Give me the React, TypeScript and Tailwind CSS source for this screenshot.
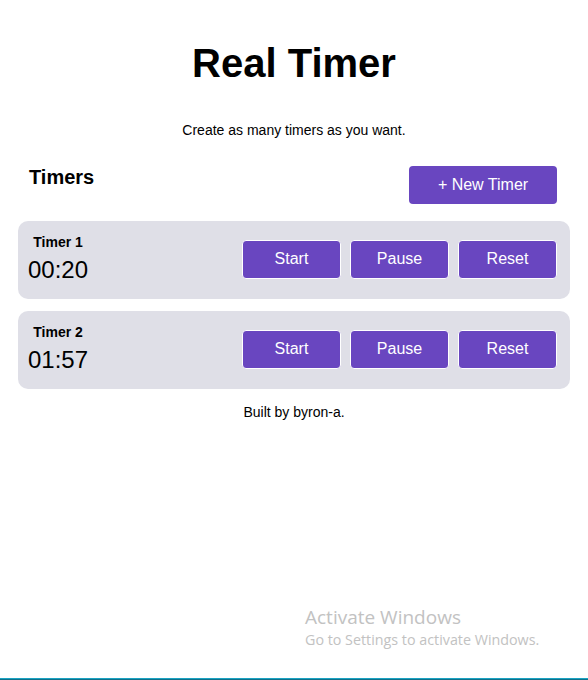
import React from "react";

type Timer = { name: string; time: string };

const timers: Timer[] = [
  { name: "Timer 1", time: "00:20" },
  { name: "Timer 2", time: "01:57" },
];

function TimerCard({ timer }: { timer: Timer }) {
  return (
    <div className="flex items-center justify-between rounded-[10px] bg-[#dfdfe7] pl-[10px] pr-[13px] pt-[13px] pb-[15px]">
      <div className="flex flex-col items-center">
        <div className="text-[14px] font-bold leading-[16px]">{timer.name}</div>
        <div className="mt-[6px] text-[24px] leading-[28px]">{timer.time}</div>
      </div>
      <div className="flex gap-[9px]">
        {["Start", "Pause", "Reset"].map((label) => (
          <button
            key={label}
            className="h-[39px] w-[99px] rounded-[4px] border border-white bg-[#6946c0] text-[16px] text-white"
          >
            {label}
          </button>
        ))}
      </div>
    </div>
  );
}

export default function App() {
  return (
    <div
      className="relative h-[680px] overflow-hidden bg-white text-black"
      style={{ fontFamily: '"Liberation Sans", Arial, sans-serif' }}
    >
      <div className="mx-auto flex w-[552px] flex-col pt-[40px]">
        <h1 className="text-center text-[40px] font-bold leading-[46px]">Real Timer</h1>
        <p className="mt-[36px] text-center text-[14px] leading-[16px]">
          Create as many timers as you want.
        </p>

        <div className="mt-[28px] flex items-start justify-between pl-[11px] pr-[13px]">
          <h2 className="text-[20px] font-bold leading-[23px]">Timers</h2>
          <button className="h-[38px] w-[148px] rounded-[4px] bg-[#6946c0] text-[16px] text-white">
            + New Timer
          </button>
        </div>

        <div className="mt-[17px] flex flex-col gap-[12px]">
          {timers.map((t) => (
            <TimerCard key={t.name} timer={t} />
          ))}
        </div>

        <p className="mt-[15px] text-center text-[14px] leading-[16px]">Built by byron-a.</p>
      </div>

      {/* OS watermark */}
      <div
        className="absolute left-[305px] top-[605px] text-[#c2c2c2]"
        style={{ fontFamily: '"Open Sans", "Noto Sans", sans-serif' }}
      >
        <div className="text-[19px] leading-[25px]">Activate Windows</div>
        <div className="text-[14.3px] leading-[20px]">Go to Settings to activate Windows.</div>
      </div>

      <div className="absolute bottom-0 left-0 right-0 h-[1px] bg-[#0f6f8a]" />
      <div className="absolute bottom-[1px] left-0 right-0 h-[1px] bg-[#1aa3c2]" />
    </div>
  );
}
